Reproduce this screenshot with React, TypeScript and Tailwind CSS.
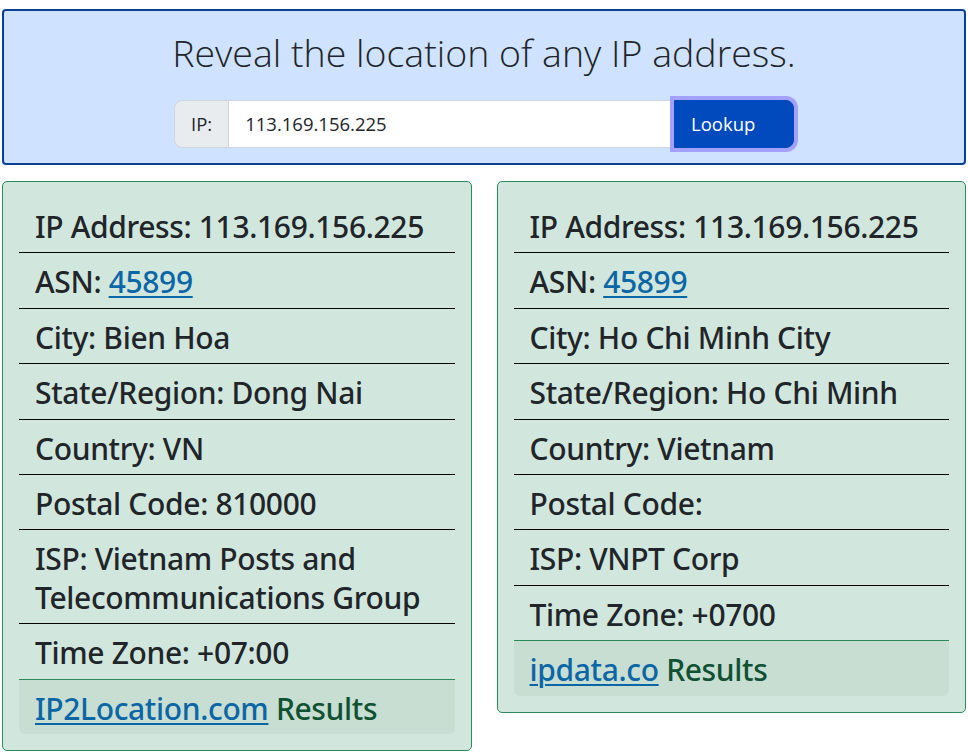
import React from 'react';

type Row = { label: string; value: string; link?: boolean };

const leftRows: Row[] = [
  { label: 'IP Address', value: '113.169.156.225' },
  { label: 'ASN', value: '45899', link: true },
  { label: 'City', value: 'Bien Hoa' },
  { label: 'State/Region', value: 'Dong Nai' },
  { label: 'Country', value: 'VN' },
  { label: 'Postal Code', value: '810000' },
  { label: 'ISP', value: 'Vietnam Posts and Telecommunications Group' },
  { label: 'Time Zone', value: '+07:00' },
];

const rightRows: Row[] = [
  { label: 'IP Address', value: '113.169.156.225' },
  { label: 'ASN', value: '45899', link: true },
  { label: 'City', value: 'Ho Chi Minh City' },
  { label: 'State/Region', value: 'Ho Chi Minh' },
  { label: 'Country', value: 'Vietnam' },
  { label: 'Postal Code', value: '' },
  { label: 'ISP', value: 'VNPT Corp' },
  { label: 'Time Zone', value: '+0700' },
];

function ResultCard({ rows, source }: { rows: Row[]; source: string }) {
  return (
    <div className="rounded-[5px] border border-[#2a8a5c] bg-[#d1e7dd] p-4">
      <ul className="font-['Noto_Sans',sans-serif] text-[30px] font-medium leading-[38.4px] tracking-[-0.35px] text-[#212529]">
        {rows.map((row, i) => (
          <li
            key={row.label}
            className={`border-b px-4 pb-[6px] pt-[10px] ${i === rows.length - 1 ? 'border-[#2a8a5c]' : 'border-black'}`}
          >
            {row.label}:{' '}
            {row.link ? (
              <a href="#" className="text-[#0b66a6] underline decoration-2 underline-offset-[3px]">
                {row.value}
              </a>
            ) : (
              row.value
            )}
          </li>
        ))}
        <li className="rounded-b-[6px] bg-[#c8ded3] px-4 pb-[6px] pt-[10px] text-[#0f5132]">
          <a href="#" className="text-[#0b66a6] underline decoration-2 underline-offset-[3px]">
            {source}
          </a>{' '}
          Results
        </li>
      </ul>
    </div>
  );
}

export default function App() {
  return (
    <div className="min-h-screen bg-white pl-[2px] pr-[2px] pt-[9px] font-['Open_Sans',sans-serif]">
      <div className="rounded-[4px] border-2 border-[#0b3f96] bg-[#cfe2ff] pb-[15px] pt-[20px]">
        <h1 className="text-center text-[37.5px] font-light leading-[43px] text-[#212529]">
          Reveal the location of any IP address.
        </h1>
        <div className="mt-[26px] flex justify-center">
          <div className="flex h-[48px] w-[620px] text-[18.5px] leading-[30px]">
            <span className="flex items-center rounded-l-[8px] border border-[#d0d6de] bg-[#e9ecef] px-4 text-[#212529]">
              IP:
            </span>
            <input
              className="min-w-0 flex-1 border border-l-0 border-[#d0d6de] bg-white px-4 text-[#212529] outline-none"
              defaultValue="113.169.156.225"
            />
            <button className="relative z-10 w-[120px] rounded-r-[8px] border border-[#004abd] bg-[#004abd] pl-[16px] text-left text-white shadow-[0_0_0_4px_#a4a0fd]">
              Lookup
            </button>
          </div>
        </div>
      </div>
      <div className="mt-[16px] grid grid-cols-2 items-start gap-[25px]">
        <ResultCard rows={leftRows} source="IP2Location.com" />
        <ResultCard rows={rightRows} source="ipdata.co" />
      </div>
    </div>
  );
}
